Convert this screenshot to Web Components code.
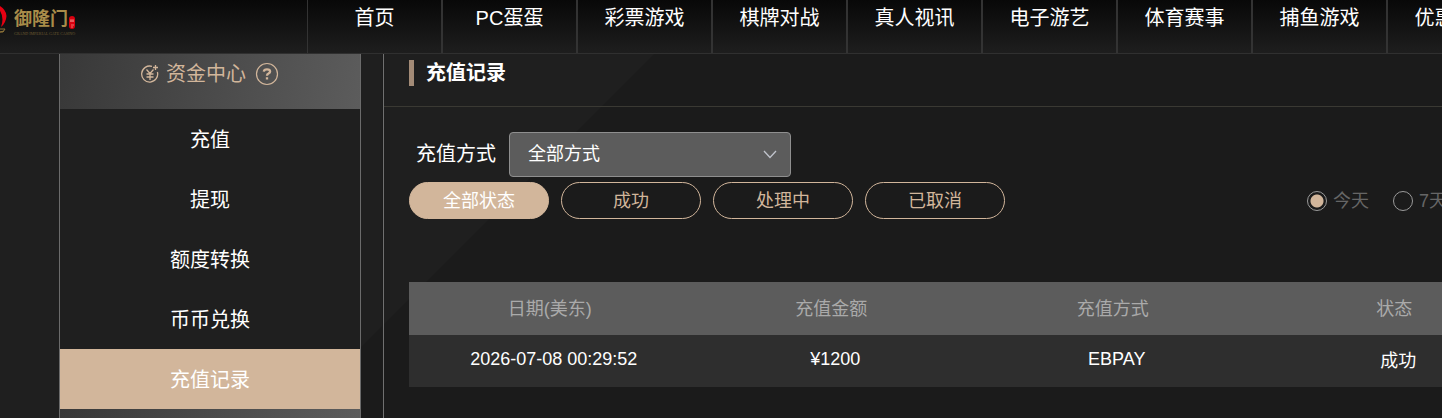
<!DOCTYPE html>
<html lang="zh-CN">
<head>
<meta charset="utf-8">
<title>充值记录</title>
<style>
  html, body {
    height: 100%;
  }
  body {
    margin: 0;
    overflow: hidden;
    background: #1b1b1b;
    color: #fff;
    font-family: "Liberation Sans", "Noto Sans CJK SC", sans-serif;
    font-size: 20px;
  }
</style>
</head>
<body>
<member-page>
  <site-header slot="header">
    <site-logo slot="logo"></site-logo>
    <nav-item>首页</nav-item>
    <nav-item>PC蛋蛋</nav-item>
    <nav-item>彩票游戏</nav-item>
    <nav-item>棋牌对战</nav-item>
    <nav-item>真人视讯</nav-item>
    <nav-item>电子游艺</nav-item>
    <nav-item>体育赛事</nav-item>
    <nav-item>捕鱼游戏</nav-item>
    <nav-item>优惠活动</nav-item>
  </site-header>
  <side-menu slot="aside">
    <span slot="title">资金中心</span>
    <side-item>充值</side-item>
    <side-item>提现</side-item>
    <side-item>额度转换</side-item>
    <side-item>币币兑换</side-item>
    <side-item active>充值记录</side-item>
  </side-menu>
  <record-panel>
    <span slot="title">充值记录</span>
    <record-filter></record-filter>
    <record-table></record-table>
  </record-panel>
</member-page>

<script>
// Base: each element only gives its own template
class BaseElement extends HTMLElement {
  connectedCallback() {
    if (this.shadowRoot) return;
    const shadowRoot = this.attachShadow({ mode: 'open' });
    shadowRoot.innerHTML = this.render();
  }
}

// Page frame: header on top, menu and content below
class MemberPage extends BaseElement {
  render() {
    return `
      <style>
        :host {
          display: flex;
          flex-direction: column;
          height: 100%;
          min-width: 1560px;
          background: linear-gradient(135deg, #1f1f1f 0, #1f1f1f 500px, #1b1b1b 501px);
        }
        .content {
          display: flex;
          flex: 1;
          min-height: 0;
          gap: 21px;
          padding-left: 59px;
        }
      </style>
      <slot name="header"></slot>
      <div class="content">
        <slot name="aside"></slot>
        <slot></slot>
      </div>`;
  }
}

class SiteHeader extends BaseElement {
  render() {
    return `
      <style>
        :host {
          display: flex;
          flex: none;
          height: 53px;
          border-bottom: 1px solid #303030;
          background: linear-gradient(#080808, #1e1e1e);
        }
        .logo {
          width: 307px;
          flex: none;
        }
        nav {
          display: flex;
        }
      </style>
      <div class="logo"><slot name="logo"></slot></div>
      <nav><slot></slot></nav>`;
  }
}

class SiteLogo extends BaseElement {
  render() {
    return `
      <style>
        :host {
          display: block;
        }
        svg {
          display: block;
        }
        .name {
          font: bold 18px "Noto Sans CJK SC", sans-serif;
          fill: #a98c49;
        }
        .sub {
          font: 4px "Liberation Serif", serif;
          fill: #6d5a31;
        }
      </style>
      <svg width="90" height="40" viewBox="0 0 90 40" role="img" aria-label="御隆门">
        <path d="M-2 5Q6 9 6.500 16Q6 23 1 27Q5 16 -2 8Z" fill="#e60012"/>
        <path d="M0 29l5 0-2 3-3 0M0 32l4-1" fill="none" stroke="#8d7338"/>
        <text class="name" x="14" y="25">御隆门</text>
        <rect x="69" y="16" width="6" height="13" rx="3" fill="#d9000f"/>
        <path d="M71 19v3M73 19v3M70 21h4M71 25h3M71 27h2" fill="none" stroke="#f0a09a" stroke-width=".7"/>
        <text class="sub" x="14" y="35">GRAND IMPERIAL GATE CASINO</text>
      </svg>`;
  }
}

class NavItem extends BaseElement {
  render() {
    return `
      <style>
        :host {
          display: block;
          box-sizing: border-box;
          width: 135px;
          border-left: 1px solid #333;
          border-right: 1px solid #333;
          text-align: center;
        }
        a {
          display: block;
          line-height: 36px;
          color: #fff;
          text-decoration: none;
        }
      </style>
      <a href="#"><slot></slot></a>`;
  }
}

class SideMenu extends BaseElement {
  render() {
    return `
      <style>
        :host {
          display: flex;
          flex-direction: column;
          flex: none;
          width: 300px;
          border: solid #6b6b6b;
          border-width: 0 1px;
        }
        .head, .next {
          background: linear-gradient(100deg, #383838, #5c5c5c);
        }
        .head {
          display: flex;
          justify-content: center;
          align-items: center;
          gap: 7px;
          flex: none;
          padding-bottom: 15px;
          line-height: 40px;
          color: #d2b69b;
        }
        .head button {
          display: flex;
          margin: 0 0 0 2px;
          padding: 0;
          border: 0;
          background: none;
          color: inherit;
        }
        .next {
          flex: 1;
        }
        svg {
          display: block;
          fill: none;
          stroke: currentColor;
        }
      </style>
      <div class="head">
        <svg width="18" height="20" viewBox="0 0 18 20" stroke-width="1.3">
          <path d="M11 2.4A8 8 0 1 0 16.4 8M14.500 1v5M12 3.500h5"/>
          <path d="M5.500 5.500L9 9.500L12.500 5.500M5.500 10h7M5.500 13h7M9 9.500V16"/>
        </svg>
        <slot name="title"></slot>
        <button type="button" aria-label="帮助">
          <svg width="24" height="24" viewBox="0 0 24 24">
            <circle cx="12" cy="12" r="10.500" stroke-width="1.200"/>
            <path d="M8.800 9.600Q9 7.300 12 7.300Q15.100 7.300 15.100 9.500Q15.100 10.700 13.500 11.600Q12 12.400 12 13.800M12 15.200v2.200" stroke-width="2.300"/>
          </svg>
        </button>
      </div>
      <slot></slot>
      <div class="next"></div>`;
  }
}

class SideItem extends BaseElement {
  render() {
    return `
      <style>
        :host {
          display: block;
          flex: none;
          text-align: center;
        }
        :host([active]) {
          background: #d2b69b;
        }
        a {
          display: block;
          padding-top: 2px;
          line-height: 58px;
          color: #fff;
          text-decoration: none;
        }
      </style>
      <a href="#"><slot></slot></a>`;
  }
}

class RecordPanel extends BaseElement {
  render() {
    return `
      <style>
        :host {
          display: block;
          flex: 1;
          border-left: 2px groove #707070;
        }
        h1 {
          display: flex;
          align-items: center;
          gap: 12px;
          margin: 0;
          padding: 0 25px 14px;
          border-bottom: 1px solid #3a3933;
          font-size: 20px;
          line-height: 38px;
        }
        h1::before {
          content: "";
          width: 5px;
          height: 26px;
          background: #a38b77;
        }
        .body {
          padding: 25px 25px 0;
        }
      </style>
      <h1><slot name="title"></slot></h1>
      <div class="body"><slot></slot></div>`;
  }
}

class RecordFilter extends BaseElement {
  render() {
    return `
      <style>
        :host {
          display: block;
        }
        .way {
          display: flex;
          align-items: center;
          gap: 13px;
          padding-left: 7px;
          margin-bottom: 5px;
        }
        .way > label {
          padding-bottom: 4px;
        }
        .select {
          display: grid;
          align-items: center;
        }
        .select > * {
          grid-area: 1 / 1;
        }
        select {
          appearance: none;
          width: 282px;
          height: 45px;
          padding: 0 18px 2px;
          border: 1px solid #8f8f8f;
          border-radius: 4px;
          background: #5c5c5c;
          color: #fff;
          font: inherit;
          font-size: 18px;
        }
        .select svg {
          justify-self: end;
          margin-right: 14px;
          pointer-events: none;
        }
        .row {
          display: flex;
          align-items: center;
          justify-content: space-between;
        }
        .status {
          display: flex;
          gap: 12px;
        }
        .status button {
          width: 140px;
          height: 37px;
          padding: 0 0 4px;
          border: 1px solid #d2b69b;
          border-radius: 20px;
          background: none;
          color: #d2b69b;
          font: inherit;
          font-size: 18px;
        }
        .status .on {
          background: #d2b69b;
          color: #fff;
        }
        .days {
          display: flex;
          gap: 24px;
          padding-right: 88px;
          color: #666;
          font-size: 18px;
        }
        .days label {
          display: flex;
          align-items: center;
          gap: 6px;
        }
        .days span {
          padding-bottom: 4px;
        }
        .days input {
          appearance: none;
          width: 20px;
          height: 20px;
          margin: 0;
          border: 1px solid #999;
          border-radius: 50%;
        }
        .days input:checked {
          background: radial-gradient(circle, #d2b69b 6px, transparent 7px);
        }
      </style>
      <div class="way">
        <label for="way">充值方式</label>
        <div class="select">
          <select id="way"><option>全部方式</option></select>
          <svg width="14" height="10" viewBox="0 0 14 10" fill="none" stroke="#c0c4cc" stroke-width="1.3">
            <path d="M1 1L7 7.500L13 1"/>
          </svg>
        </div>
      </div>
      <div class="row">
        <div class="status">
          <button type="button" class="on">全部状态</button>
          <button type="button">成功</button>
          <button type="button">处理中</button>
          <button type="button">已取消</button>
        </div>
        <div class="days">
          <label><input type="radio" name="day" checked><span>今天</span></label>
          <label><input type="radio" name="day"><span>7天</span></label>
        </div>
      </div>`;
  }
}

class RecordTable extends BaseElement {
  render() {
    return `
      <style>
        :host {
          display: block;
          margin-top: 63px;
        }
        table {
          width: 100%;
          table-layout: fixed;
          border-collapse: collapse;
          font-size: 18px;
          text-align: center;
        }
        th {
          height: 49px;
          padding: 0 0 4px;
          background: #5c5c5c;
          color: #aaa;
          font-weight: normal;
        }
        td {
          height: 48px;
          padding: 0 0 4px 8px;
          background: #2e2e2e;
        }
      </style>
      <table>
        <thead>
          <tr><th>日期(美东)</th><th>充值金额</th><th>充值方式</th><th>状态</th></tr>
        </thead>
        <tbody>
          <tr><td>2026-07-08 00:29:52</td><td>¥1200</td><td>EBPAY</td><td>成功</td></tr>
        </tbody>
      </table>`;
  }
}

customElements.define('member-page', MemberPage);
customElements.define('site-header', SiteHeader);
customElements.define('site-logo', SiteLogo);
customElements.define('nav-item', NavItem);
customElements.define('side-menu', SideMenu);
customElements.define('side-item', SideItem);
customElements.define('record-panel', RecordPanel);
customElements.define('record-filter', RecordFilter);
customElements.define('record-table', RecordTable);
</script>
</body>
</html>
